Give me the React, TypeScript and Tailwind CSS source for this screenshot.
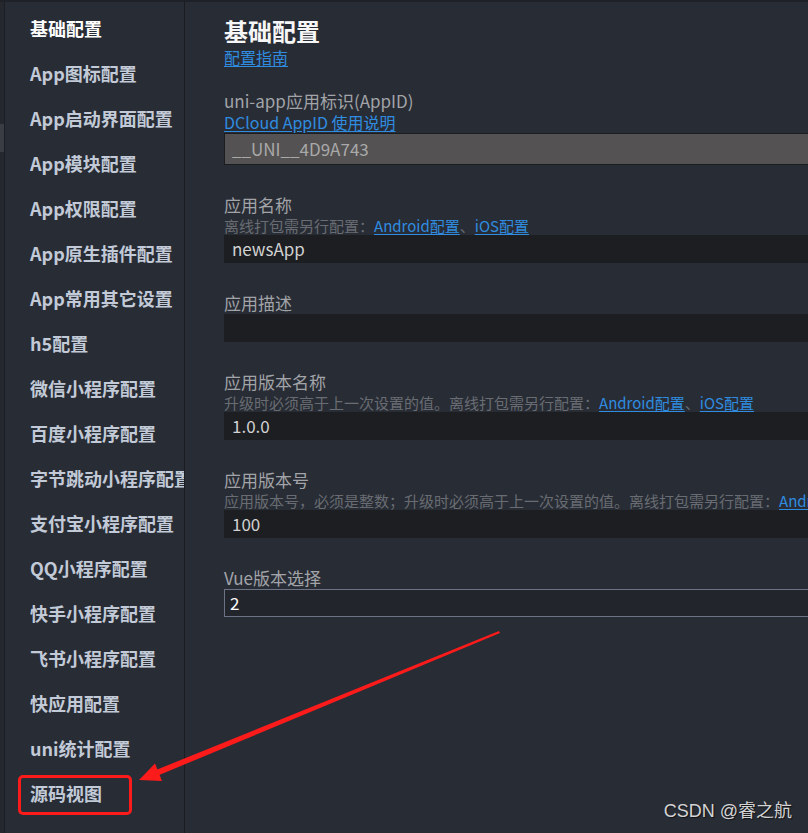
import type { ReactNode } from "react";

const menuItems = [
	"基础配置",
	"App图标配置",
	"App启动界面配置",
	"App模块配置",
	"App权限配置",
	"App原生插件配置",
	"App常用其它设置",
	"h5配置",
	"微信小程序配置",
	"百度小程序配置",
	"字节跳动小程序配置",
	"支付宝小程序配置",
	"QQ小程序配置",
	"快手小程序配置",
	"飞书小程序配置",
	"快应用配置",
	"uni统计配置",
	"源码视图",
];

const Link = ({ children }: { children: ReactNode }) => (
	<a href="#" className="text-[#2f8ce0] underline underline-offset-2">
		{children}
	</a>
);

const OfflineLinks = () => (
	<>
		<Link>Android配置</Link>、<Link>iOS配置</Link>
	</>
);

type FieldProps = {
	label: string;
	desc?: ReactNode;
	children: ReactNode;
};

const Field = ({ label, desc, children }: FieldProps) => {
	return (
		<div className="mt-[29px] flex flex-col">
			<div className="text-[17px] leading-[22px] text-[#a2a4a8]">{label}</div>
			{desc && (
				<div className="text-[15px] leading-[19px] text-[#696c72] whitespace-nowrap">{desc}</div>
			)}
			{children}
		</div>
	);
};

const Input = ({ value }: { value?: string }) => (
	<div className="w-[640px] h-[28px] bg-[#1d1e22] pl-[8px] text-[17px] leading-[28px] text-[#d2d2d2]">
		{value}
	</div>
);

export default function App() {
	return (
		<div
			className="relative w-[808px] h-[833px] overflow-hidden bg-[#282c35] flex"
			style={{ fontFamily: '"Noto Sans CJK SC", "Noto Sans", sans-serif' }}
		>
			<div className="absolute top-0 left-0 right-0 h-[2px] bg-[#1e2127]" />

			{/* left edge */}
			<div className="w-[5px] shrink-0 bg-[#25282f] border-r border-[#1c1e23]">
				<div className="mt-[124px] h-[28px] bg-[#3a3d44]" />
			</div>

			{/* sidebar */}
			<div className="w-[180px] shrink-0 pt-[6px] border-r border-[#1a1c21] overflow-hidden">
				{menuItems.map((item, i) => (
					<div
						key={item}
						className={`h-[45px] flex items-center pl-[25px] whitespace-nowrap text-[18px] font-bold ${
							i === 0 ? "text-white" : "text-[#c2cad7]"
						}`}
					>
						{item}
					</div>
				))}
			</div>

			{/* main */}
			<div className="flex-1 overflow-hidden pl-[39px] pt-[16px]">
				<h1 className="text-[24px] leading-[30px] font-bold text-[#f6f6f6]">基础配置</h1>
				<div className="text-[16px] leading-[22px]">
					<Link>配置指南</Link>
				</div>

				<div className="mt-[22px] mb-[2px] flex flex-col">
					<div className="text-[17px] leading-[22px] text-[#a2a4a8]">uni-app应用标识(AppID)</div>
					<div className="text-[16px] leading-[21px]">
						<Link>DCloud AppID 使用说明</Link>
					</div>
					<div className="w-[640px] h-[32px] bg-[#545252] border border-[#1c1d21] pl-[7px] text-[17px] leading-[30px] text-[#a9a9a9]">
						__UNI__4D9A743
					</div>
				</div>

				<Field
					label="应用名称"
					desc={
						<>
							离线打包需另行配置：<OfflineLinks />
						</>
					}
				>
					<Input value="newsApp" />
				</Field>

				<Field label="应用描述">
					<Input />
				</Field>

				<Field
					label="应用版本名称"
					desc={
						<>
							升级时必须高于上一次设置的值。离线打包需另行配置：<OfflineLinks />
						</>
					}
				>
					<Input value="1.0.0" />
				</Field>

				<Field
					label="应用版本号"
					desc={
						<>
							应用版本号，必须是整数；升级时必须高于上一次设置的值。离线打包需另行配置：<OfflineLinks />
						</>
					}
				>
					<Input value="100" />
				</Field>

				<Field label="Vue版本选择">
					<div className="w-[640px] h-[28px] bg-[#22252c] border border-[#6b7385] pl-[5px] text-[17px] leading-[26px] text-white">
						2
					</div>
				</Field>
			</div>

			{/* annotation box */}
			<div className="absolute left-[18px] top-[775px] w-[114px] h-[40px] border-[3px] border-[#fb1b1b] rounded-[5px]" />

			{/* annotation arrow */}
			<svg className="absolute inset-0" width="808" height="833" viewBox="0 0 808 833">
				<polygon points="499,631 500,633 158,775.5 156,770" fill="#fb1b1b" />
				<polygon points="139,780 155,763.5 162,781" fill="#fb1b1b" />
			</svg>

			{/* watermark */}
			<div
				className="absolute right-[16px] bottom-[8px] text-[18px] text-[#d4d4d4]"
				style={{
					fontFamily: '"Liberation Sans", "Noto Sans CJK SC", sans-serif',
					textShadow: "1px 1px 1px rgba(0,0,0,0.6)",
				}}
			>
				CSDN @睿之航
			</div>
		</div>
	);
}
